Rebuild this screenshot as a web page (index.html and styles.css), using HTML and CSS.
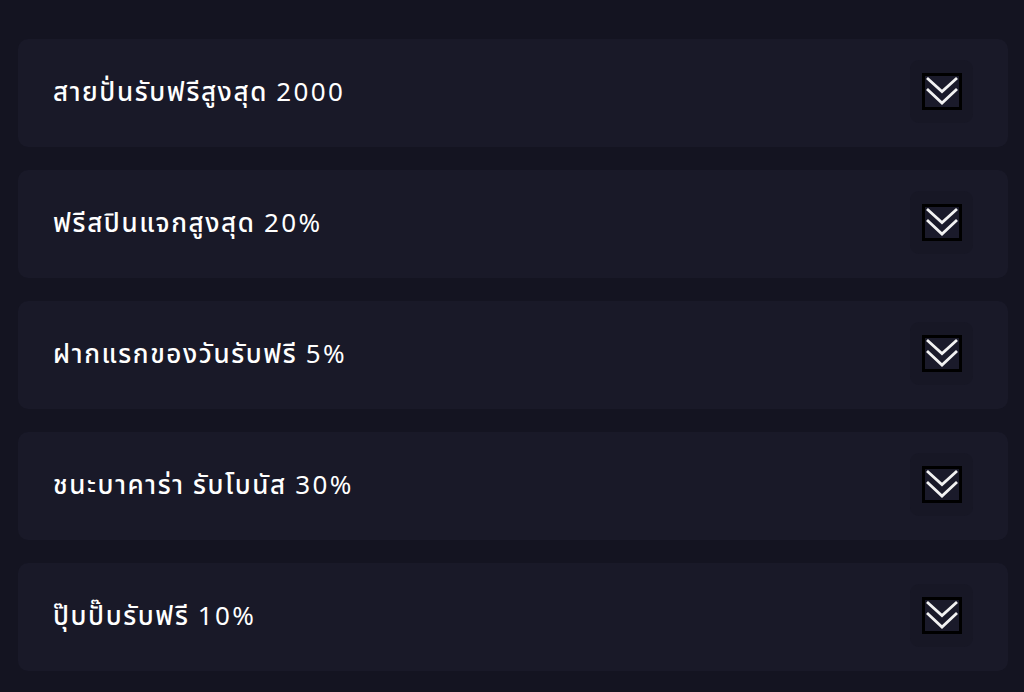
FILE: index.html
```html
<!DOCTYPE html>
<html lang="th">
<head>
<meta charset="utf-8">
<link rel="stylesheet" href="styles.css">
</head>
<body>
<div class="list">
  <div class="item"><span class="label">สายปั่นรับฟรีสูงสุด <span class="num">2000</span></span><span class="btn"><span class="ico"><svg viewBox="0 0 34 31" width="34" height="31"><path d="M2 2 L17 15.5 L32 2 M2 13 L17 27 L32 13" fill="none" stroke="#f2f2f2" stroke-width="2.8"/></svg></span></span></div>
  <div class="item"><span class="label">ฟรีสปินแจกสูงสุด <span class="num">20%</span></span><span class="btn"><span class="ico"><svg viewBox="0 0 34 31" width="34" height="31"><path d="M2 2 L17 15.5 L32 2 M2 13 L17 27 L32 13" fill="none" stroke="#f2f2f2" stroke-width="2.8"/></svg></span></span></div>
  <div class="item"><span class="label">ฝากแรกของวันรับฟรี <span class="num">5%</span></span><span class="btn"><span class="ico"><svg viewBox="0 0 34 31" width="34" height="31"><path d="M2 2 L17 15.5 L32 2 M2 13 L17 27 L32 13" fill="none" stroke="#f2f2f2" stroke-width="2.8"/></svg></span></span></div>
  <div class="item"><span class="label">ชนะบาคาร่า รับโบนัส <span class="num">30%</span></span><span class="btn"><span class="ico"><svg viewBox="0 0 34 31" width="34" height="31"><path d="M2 2 L17 15.5 L32 2 M2 13 L17 27 L32 13" fill="none" stroke="#f2f2f2" stroke-width="2.8"/></svg></span></span></div>
  <div class="item"><span class="label">ปุ๊บปั๊บรับฟรี <span class="num">10%</span></span><span class="btn"><span class="ico"><svg viewBox="0 0 34 31" width="34" height="31"><path d="M2 2 L17 15.5 L32 2 M2 13 L17 27 L32 13" fill="none" stroke="#f2f2f2" stroke-width="2.8"/></svg></span></span></div>
</div>
</body>
</html>
```
FILE: styles.css
```css
html, body {
  margin: 0;
  padding: 0;
  background: #141421;
  height: 100%;
  overflow: hidden;
}
.list {
  display: flex;
  flex-direction: column;
  gap: 23px;
  padding: 39px 16px 0 18px;
}
.item {
  height: 108px;
  background: #191928;
  border-radius: 10px;
  display: flex;
  align-items: center;
  justify-content: space-between;
  padding: 0 35px 0 35px;
  box-sizing: border-box;
}
.label {
  color: #fff;
  font-family: "Noto Sans", "Noto Sans Thai", "Noto Sans CJK SC", sans-serif;
  font-size: 26px;
  font-weight: 500;
  letter-spacing: 1.6px;
}
.num {
  font-weight: 400;
  letter-spacing: 2.4px;
}
.btn {
  width: 63px;
  height: 63px;
  border-radius: 9px;
  background: #171725;
  display: flex;
  align-items: center;
  justify-content: center;
  margin-bottom: 4px;
}
.ico {
  width: 34px;
  height: 31px;
  border: 3px solid #000;
  background: #1a1a2a;
  display: block;
}
.ico svg {
  display: block;
}
```
